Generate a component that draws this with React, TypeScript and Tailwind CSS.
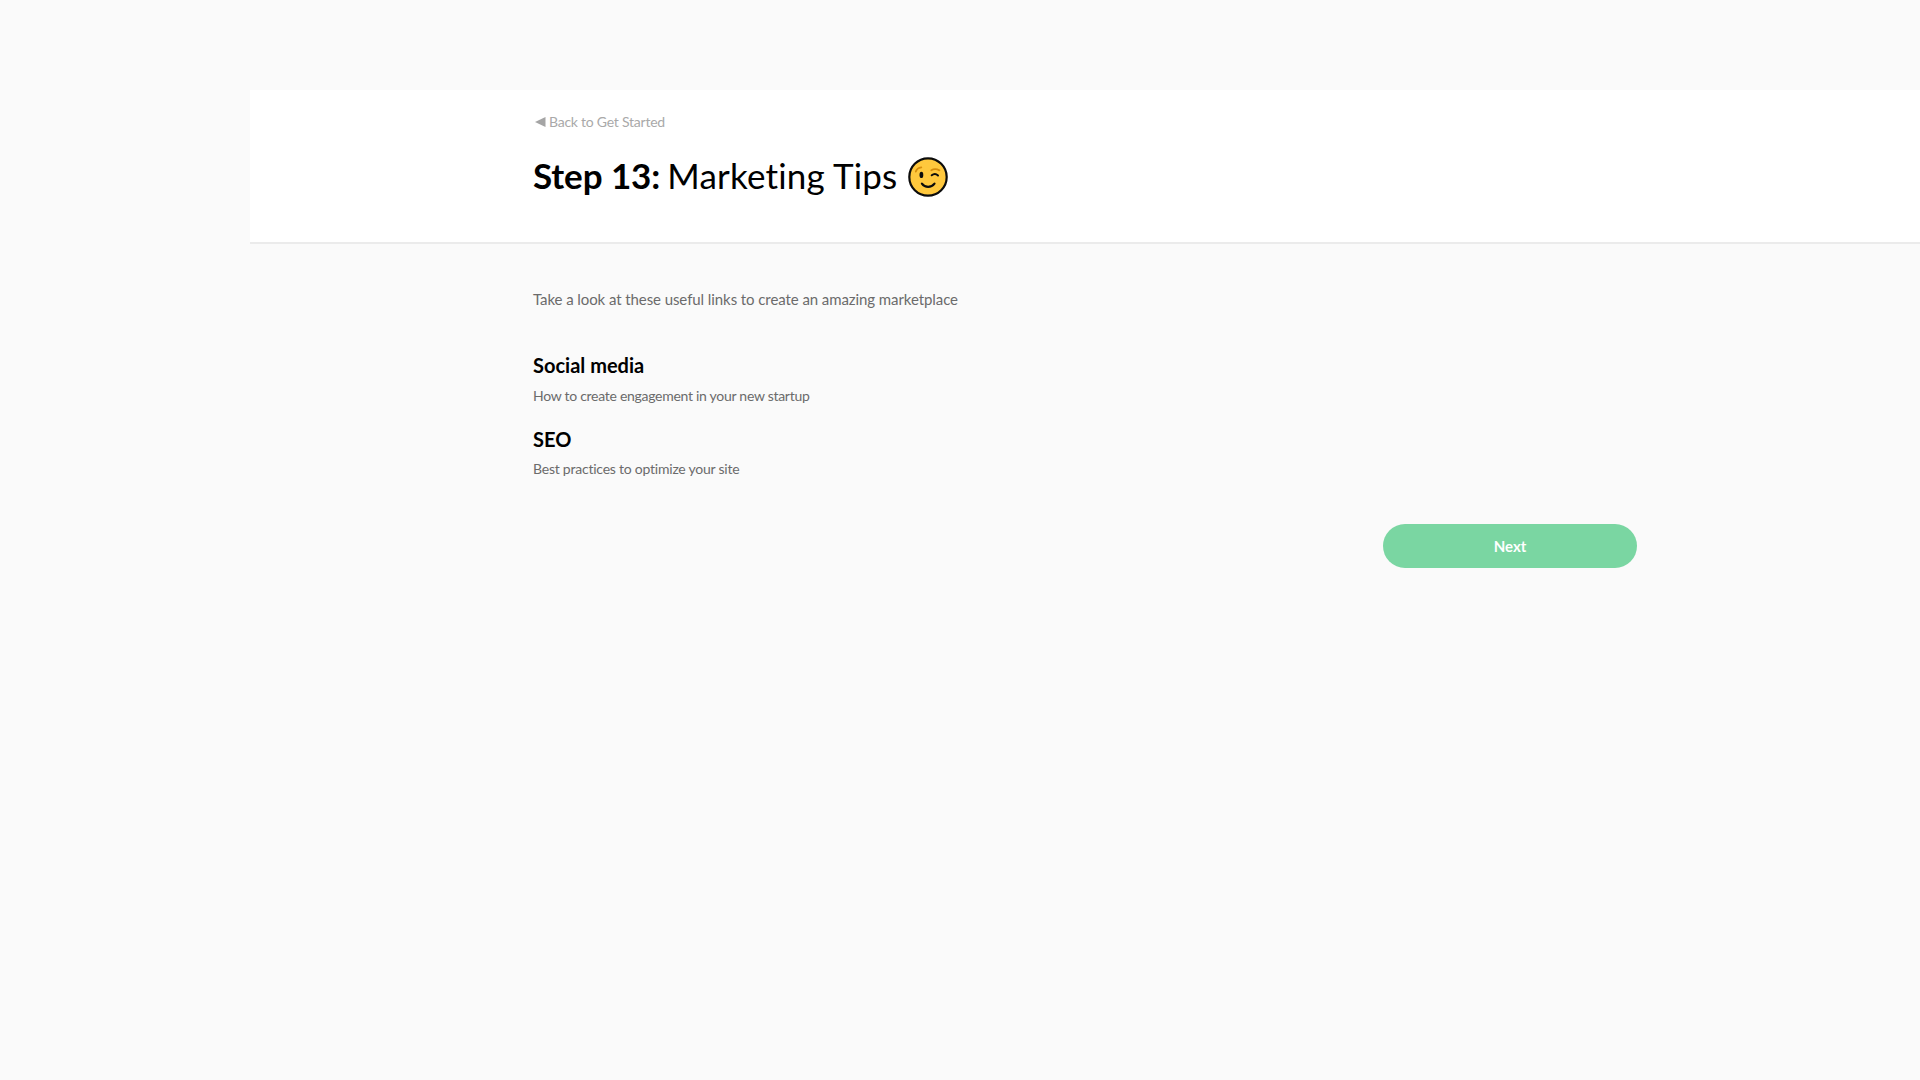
function WinkingFace() {
  return (
    <svg className="mt-[3px] ml-[10px] shrink-0" width="42" height="42" viewBox="0 0 42 42" fill="none" strokeLinecap="round" strokeLinejoin="round">
      <circle cx="21" cy="21" r="18.7" fill="#ffc83d" stroke="#0c0c0c" strokeWidth="2.2" />
      <path d="M8.8 15.6c.8-2.5 2.8-3.9 5.5-4.2" stroke="#d68d0c" strokeWidth="1.8" />
      <path d="M24.3 14.2c2.7-1.5 5.5-1.3 8.1.2" stroke="#d68d0c" strokeWidth="1.8" />
      <ellipse cx="14.4" cy="18.9" rx="1.9" ry="3.1" fill="#0c0c0c" />
      <path d="M24.7 19.3c1.9-1.5 4.6-1.4 6.3.2" stroke="#0c0c0c" strokeWidth="2" />
      <path d="M14.9 27.6c3.2 4.4 9.2 4.4 12.6 0" stroke="#0c0c0c" strokeWidth="2.2" />
    </svg>
  );
}

export default function App() {
  return (
    <div className="min-h-screen bg-[#fafafa] pt-[90px] pl-[250px] font-['Lato',sans-serif] text-black [font-variant-ligatures:none]">
      <header className="h-[154px] border-b-2 border-[#ebebeb] bg-white pt-[22px] pl-[283px]">
        <a className="flex h-5 items-center text-sm tracking-[-0.24px] text-[#a9a9a9]">
          <svg className="mr-[3px] ml-[2px]" width="11" height="10" viewBox="0 0 11 10" fill="#a5a5a5"><path d="M0 5 10.5 0v10z" /></svg>
          Back to Get Started
        </a>
        <h1 className="mt-[19px] flex h-12 items-center text-[35px] font-normal whitespace-pre">
          <b className="tracking-[-0.1px]">Step 13:</b>
          <span className="-ml-[2px] tracking-[0.18px]"> Marketing Tips</span>
          <WinkingFace />
        </h1>
      </header>
      <main className="ml-[283px] w-[1104px] pt-[43px]">
        <p className="h-6 text-[15px] leading-6 tracking-[-0.08px] text-[#6b6b6b]">Take a look at these useful links to create an amazing marketplace</p>
        <h2 className="mt-[40px] text-xl leading-7 font-bold">Social media</h2>
        <p className="mt-[5px] text-sm leading-6 tracking-[-0.28px] text-[#6b6b6b]">How to create engagement in your new startup</p>
        <h2 className="mt-[17px] text-xl leading-7 font-bold">SEO</h2>
        <p className="mt-1 text-sm leading-6 tracking-[-0.23px] text-[#6b6b6b]">Best practices to optimize your site</p>
        <button className="mt-[43px] ml-auto block h-11 w-[254px] rounded-full bg-[#7ad6a2] text-[15px] font-bold text-white">Next</button>
      </main>
    </div>
  );
}
